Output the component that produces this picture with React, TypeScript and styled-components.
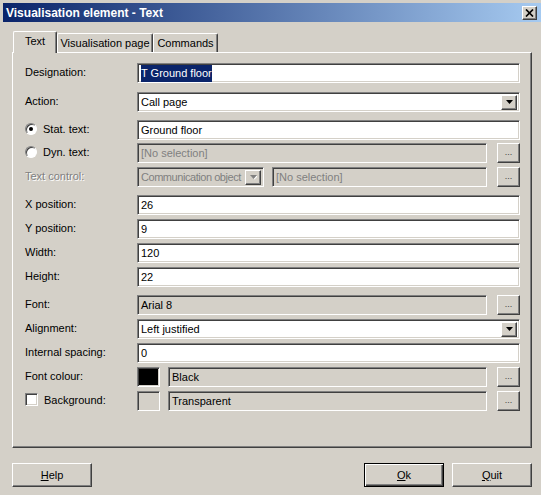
import React from "react";
import styled, { createGlobalStyle, css } from "styled-components";

const GlobalStyle = createGlobalStyle`
  html, body {
    margin: 0;
    padding: 0;
    background: #d4d0c8;
  }
  body {
    font-family: "Liberation Sans", Arial, sans-serif;
    font-size: 11px;
    color: #000;
  }
`;

const raised = css`
  border-top: 1px solid #ffffff;
  border-left: 1px solid #ffffff;
  border-right: 1px solid #404040;
  border-bottom: 1px solid #404040;
  box-shadow: inset -1px -1px 0 #808080, inset 1px 1px 0 #d4d0c8;
  background: #d4d0c8;
  box-sizing: border-box;
`;

const sunken = css`
  border-top: 1px solid #808080;
  border-left: 1px solid #808080;
  border-right: 1px solid #ffffff;
  border-bottom: 1px solid #ffffff;
  box-shadow: inset 1px 1px 0 #404040, inset -1px -1px 0 #d4d0c8;
  box-sizing: border-box;
`;

const Window = styled.div`
  width: 541px;
  height: 495px;
  padding-top: 3px;
  box-sizing: border-box;
  background: #d4d0c8;
  overflow: hidden;
`;

const TitleBar = styled.div`
  display: flex;
  align-items: center;
  justify-content: space-between;
  height: 19px;
  margin-left: 3px;
  padding: 0 4px 0 3px;
  background: linear-gradient(to right, #0a246a, #a6caf0);
  color: #fff;
  font-weight: bold;
  font-size: 12px;
`;

const CloseButton = styled.div`
  ${raised};
  width: 15px;
  height: 14px;
  display: flex;
  align-items: center;
  justify-content: center;
`;

const Body = styled.div`
  padding: 9px 9px 0 12px;
`;

const TabStrip = styled.div`
  display: flex;
  align-items: flex-end;
  height: 21px;
  padding-left: 1px;
`;

const Tab = styled.div<{ $active?: boolean; $w: number }>`
  position: relative;
  display: flex;
  align-items: center;
  justify-content: center;
  box-sizing: border-box;
  width: ${(p) => p.$w}px;
  border-top: 1px solid #ffffff;
  border-left: 1px solid #ffffff;
  border-right: 1px solid #404040;
  box-shadow: inset -1px 0 0 #808080;
  background: #d4d0c8;
  border-radius: 2px 2px 0 0;
  height: ${(p) => (p.$active ? "22px" : "19px")};
  margin-bottom: ${(p) => (p.$active ? "-1px" : "0")};
  padding-bottom: ${(p) => (p.$active ? "3px" : "0")};
  z-index: ${(p) => (p.$active ? 1 : 0)};
`;

const Panel = styled.div`
  width: 520px;
  height: 396px;
  box-sizing: border-box;
  border-top: 1px solid #ffffff;
  border-left: 1px solid #ffffff;
  border-right: 1px solid #404040;
  border-bottom: 1px solid #404040;
  box-shadow: inset -1px -1px 0 #808080;
  padding: 10px 11px 0 12px;
  display: flex;
  flex-direction: column;
`;

const Row = styled.div<{ $top: number }>`
  display: flex;
  align-items: center;
  height: 20px;
  margin-top: ${(p) => p.$top}px;
`;

const Label = styled.div<{ $disabled?: boolean }>`
  width: 112px;
  flex-shrink: 0;
  display: flex;
  align-items: center;
  padding-bottom: 3px;
  box-sizing: border-box;
  color: ${(p) => (p.$disabled ? "#808080" : "#000")};
  text-shadow: ${(p) => (p.$disabled ? "1px 1px 0 #ffffff" : "none")};
`;

const Radio = styled.span<{ $checked?: boolean }>`
  width: 12px;
  height: 12px;
  border-radius: 50%;
  box-sizing: border-box;
  background: #fff;
  border: 1px solid;
  border-color: #808080 #ffffff #ffffff #808080;
  box-shadow: inset 1px 1px 0 #404040;
  margin-right: 6px;
  display: flex;
  align-items: center;
  justify-content: center;
  flex-shrink: 0;

  &::after {
    content: "";
    width: 4px;
    height: 4px;
    border-radius: 50%;
    background: ${(p) => (p.$checked ? "#000" : "transparent")};
  }
`;

const Checkbox = styled.span`
  ${sunken};
  width: 13px;
  height: 13px;
  background: #fff;
  margin-right: 6px;
  flex-shrink: 0;
`;

const Field = styled.div<{ $dim?: boolean; $width?: number }>`
  ${sunken};
  height: 20px;
  flex: ${(p) => (p.$width ? "0 0 auto" : "1")};
  width: ${(p) => (p.$width ? `${p.$width}px` : "auto")};
  background: ${(p) => (p.$dim ? "#d4d0c8" : "#ffffff")};
  display: flex;
  align-items: center;
  padding: 0 2px 0 3px;
  white-space: nowrap;
  overflow: hidden;
`;

const FieldText = styled.span<{ $grey?: boolean; $tight?: boolean }>`
  flex: 1;
  min-width: 0;
  color: ${(p) => (p.$grey ? "#808080" : "#000")};
  letter-spacing: ${(p) => (p.$tight ? "-0.45px" : "normal")};
`;

const Selected = styled.span`
  background: #0a246a;
  color: #fff;
  padding: 2px 0 3px;
`;

const ArrowButton = styled.div`
  ${raised};
  width: 16px;
  height: 15px;
  flex-shrink: 0;
  display: flex;
  align-items: center;
  justify-content: center;
`;

const DotsButton = styled.div`
  ${raised};
  width: 23px;
  height: 20px;
  margin-left: 10px;
  flex-shrink: 0;
  display: flex;
  align-items: center;
  justify-content: center;
  color: #404040;
  font-size: 9px;
  padding-bottom: 2px;
`;

const Swatch = styled.div<{ $fill: string }>`
  ${sunken};
  width: 23px;
  height: 20px;
  flex-shrink: 0;
  margin-right: 8px;
  background: ${(p) => p.$fill};
`;

const Gap = styled.div<{ $w: number }>`
  width: ${(p) => p.$w}px;
  flex-shrink: 0;
`;

const Footer = styled.div`
  display: flex;
  align-items: center;
  margin-top: 15px;
`;

const Spacer = styled.div`
  flex: 1;
`;

const Button = styled.div<{ $default?: boolean }>`
  ${raised};
  width: 80px;
  height: 24px;
  display: flex;
  align-items: center;
  justify-content: center;
  margin-left: ${(p) => (p.$default ? "0" : "8px")};
  ${(p) =>
    p.$default &&
    css`
      border: 1px solid #000;
      box-shadow: inset 1px 1px 0 #ffffff, inset -1px -1px 0 #404040,
        inset -2px -2px 0 #808080;
    `}
  &:first-child {
    margin-left: 0;
  }
`;

const Arrow = ({ disabled }: { disabled?: boolean }) => (
  <svg width="7" height="5" viewBox="0 0 7 5">
    {disabled && <path d="M1 1h7L4.5 4.5z" fill="#fff" />}
    <path d="M0 0h7L3.5 4z" fill={disabled ? "#808080" : "#000"} />
  </svg>
);

export default function App() {
  return (
    <Window>
      <GlobalStyle />
      <TitleBar>
        <span>Visualisation element - Text</span>
        <CloseButton>
          <svg width="9" height="8" viewBox="0 0 9 8">
            <path d="M1 0.5l7 7M8 0.5l-7 7" stroke="#000" strokeWidth="1.7" />
          </svg>
        </CloseButton>
      </TitleBar>
      <Body>
        <TabStrip>
          <Tab $active $w={44}>Text</Tab>
          <Tab $w={96}>Visualisation page</Tab>
          <Tab $w={65}>Commands</Tab>
        </TabStrip>
        <Panel>
          <Row $top={0}>
            <Label>Designation:</Label>
            <Field>
              <FieldText>
                <Selected>T Ground floor</Selected>
              </FieldText>
            </Field>
          </Row>
          <Row $top={9}>
            <Label>Action:</Label>
            <Field>
              <FieldText>Call page</FieldText>
              <ArrowButton>
                <Arrow />
              </ArrowButton>
            </Field>
          </Row>
          <Row $top={8}>
            <Label>
              <Radio $checked />
              Stat. text:
            </Label>
            <Field>
              <FieldText>Ground floor</FieldText>
            </Field>
          </Row>
          <Row $top={3}>
            <Label>
              <Radio />
              Dyn. text:
            </Label>
            <Field $dim>
              <FieldText $grey>[No selection]</FieldText>
            </Field>
            <DotsButton>...</DotsButton>
          </Row>
          <Row $top={4}>
            <Label $disabled>Text control:</Label>
            <Field $dim $width={127}>
              <FieldText $grey $tight>Communication object</FieldText>
              <ArrowButton>
                <Arrow disabled />
              </ArrowButton>
            </Field>
            <Gap $w={8} />
            <Field $dim>
              <FieldText $grey>[No selection]</FieldText>
            </Field>
            <DotsButton>...</DotsButton>
          </Row>
          <Row $top={8}>
            <Label>X position:</Label>
            <Field>
              <FieldText>26</FieldText>
            </Field>
          </Row>
          <Row $top={4}>
            <Label>Y position:</Label>
            <Field>
              <FieldText>9</FieldText>
            </Field>
          </Row>
          <Row $top={4}>
            <Label>Width:</Label>
            <Field>
              <FieldText>120</FieldText>
            </Field>
          </Row>
          <Row $top={4}>
            <Label>Height:</Label>
            <Field>
              <FieldText>22</FieldText>
            </Field>
          </Row>
          <Row $top={8}>
            <Label>Font:</Label>
            <Field $dim>
              <FieldText>Arial 8</FieldText>
            </Field>
            <DotsButton>...</DotsButton>
          </Row>
          <Row $top={4}>
            <Label>Alignment:</Label>
            <Field>
              <FieldText>Left justified</FieldText>
              <ArrowButton>
                <Arrow />
              </ArrowButton>
            </Field>
          </Row>
          <Row $top={4}>
            <Label>Internal spacing:</Label>
            <Field>
              <FieldText>0</FieldText>
            </Field>
          </Row>
          <Row $top={4}>
            <Label>Font colour:</Label>
            <Swatch $fill="#000000" />
            <Field $dim>
              <FieldText>Black</FieldText>
            </Field>
            <DotsButton>...</DotsButton>
          </Row>
          <Row $top={4}>
            <Label>
              <Checkbox />
              Background:
            </Label>
            <Swatch $fill="#d4d0c8" />
            <Field $dim>
              <FieldText>Transparent</FieldText>
            </Field>
            <DotsButton>...</DotsButton>
          </Row>
        </Panel>
        <Footer>
          <Button>
            <span>
              <u>H</u>elp
            </span>
          </Button>
          <Spacer />
          <Button $default>
            <span>
              <u>O</u>k
            </span>
          </Button>
          <Button>
            <span>
              <u>Q</u>uit
            </span>
          </Button>
        </Footer>
      </Body>
    </Window>
  );
}
